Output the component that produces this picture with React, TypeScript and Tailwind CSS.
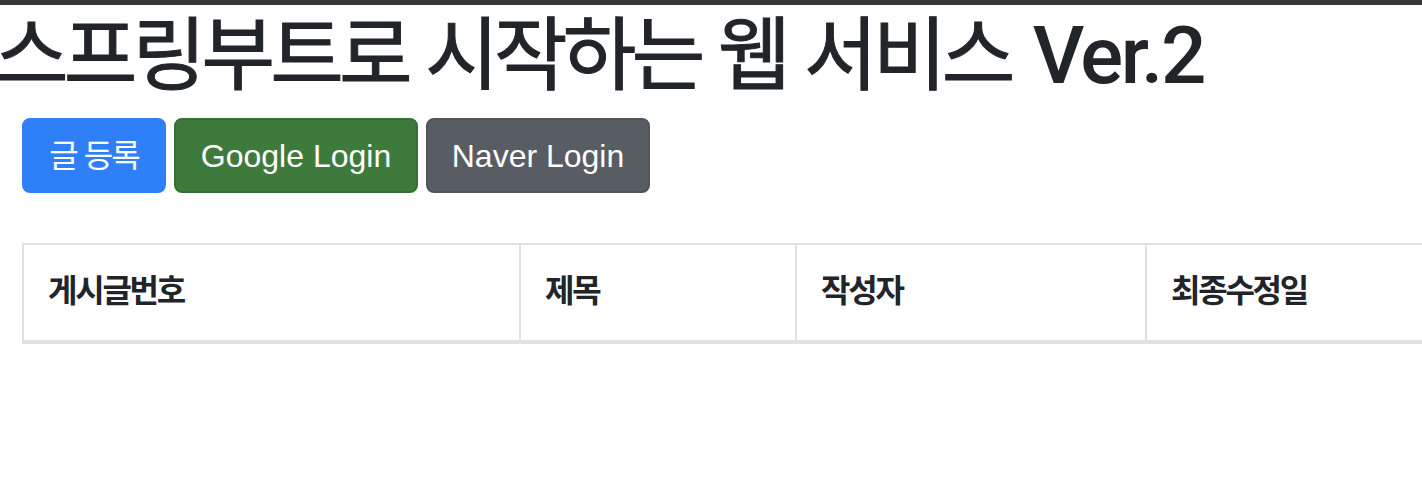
import React from "react";

const kr = "font-['Liberation_Sans','Noto_Sans_CJK_KR',sans-serif]";

const columns = [
  { label: "게시글번호", width: "w-[497px]" },
  { label: "제목", width: "w-[276px]" },
  { label: "작성자", width: "w-[350px]" },
  { label: "최종수정일", width: "w-[400px]" },
];

export default function App() {
  return (
    <div className={`min-h-screen w-full overflow-hidden bg-white text-[#212529] ${kr}`}>
      <div className="h-[5px] bg-[#36373b]" />

      <h1 className="ml-[-5px] mt-[5px] whitespace-nowrap text-[80px] leading-[92px]">
        <span className="font-normal tracking-[-0.06em] [-webkit-text-stroke:1px_#212529]">스프링부트로 시작하는 웹 서비스</span>{" "}
        <span className="font-['Roboto',sans-serif] font-medium tracking-[-0.03em]">Ver.2</span>
      </h1>

      <div className="ml-[22px] mt-[16px] flex gap-[8px]">
        <button className="h-[75px] w-[144px] rounded-[8px] border-2 border-[#2f80f8] bg-[#2f80f8] text-[32px] tracking-[-0.06em] text-white">
          글 등록
        </button>
        <button className="h-[75px] w-[244px] rounded-[8px] border-2 border-[#376f36] bg-[#3f7a3d] text-[32px] text-white">
          Google Login
        </button>
        <button className="h-[75px] w-[224px] rounded-[8px] border-2 border-[#50545b] bg-[#585c63] text-[32px] text-white">
          Naver Login
        </button>
      </div>

      <div className="ml-[22px] mt-[50px] w-[1600px]">
        <table className="border-collapse">
          <thead>
            <tr>
              {columns.map((c) => (
                <th
                  key={c.label}
                  className={`${c.width} h-[98px] border-x-2 border-t-2 border-b-4 border-[#dee2e6] px-[24px] pb-[4px] text-left align-middle text-[32px] font-bold tracking-[-0.07em]`}
                >
                  {c.label}
                </th>
              ))}
            </tr>
          </thead>
          <tbody />
        </table>
      </div>
    </div>
  );
}
